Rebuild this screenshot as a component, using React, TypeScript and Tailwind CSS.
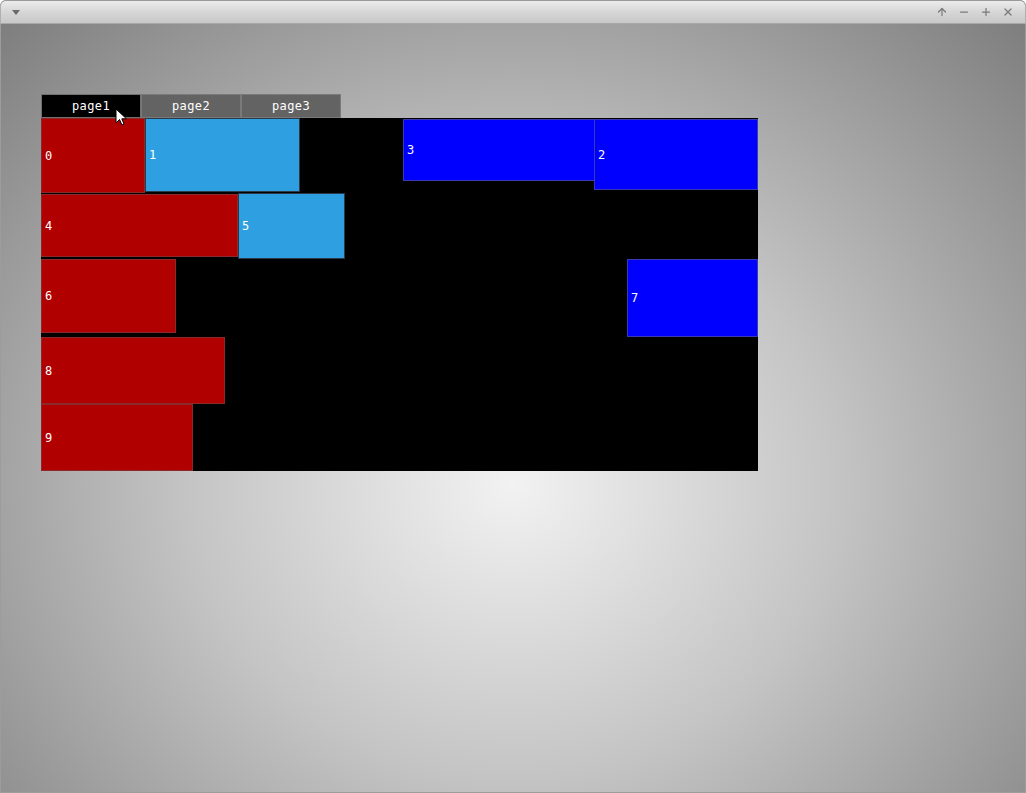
import { ArrowUp, Minus, Plus, X } from "lucide-react";

type Box = { id: number; left: number; top: number; w: number; h: number; kind: "red" | "sky" | "blue" };

const boxes: Box[] = [
    { id: 0, left: 0, top: 0, w: 104, h: 75, kind: "red" },
    { id: 1, left: 104, top: 0, w: 155, h: 74, kind: "sky" },
    { id: 3, left: 362, top: 1, w: 192, h: 62, kind: "blue" },
    { id: 2, left: 553, top: 1, w: 164, h: 71, kind: "blue" },
    { id: 4, left: 0, top: 76, w: 197, h: 63, kind: "red" },
    { id: 5, left: 197, top: 75, w: 107, h: 66, kind: "sky" },
    { id: 6, left: 0, top: 141, w: 135, h: 74, kind: "red" },
    { id: 7, left: 586, top: 141, w: 131, h: 78, kind: "blue" },
    { id: 8, left: 0, top: 219, w: 184, h: 67, kind: "red" },
    { id: 9, left: 0, top: 286, w: 152, h: 67, kind: "red" },
];

const kindClass = {
    red: "bg-[#b00000] border-[#8a2a2a]",
    sky: "bg-[#2ea0e2] border-[#2b3a48]",
    blue: "bg-[#0000ff] border-[#3a3ab0]",
};

function App() {
    return (
        <div className="w-[1026px] h-[793px] flex flex-col overflow-hidden font-['DejaVu_Sans_Mono',monospace] bg-[#8a8a8a] rounded-t-[6px]">
            <div className="h-[24px] shrink-0 flex items-center justify-between px-[10px] bg-gradient-to-b from-[#ececec] via-[#d6d6d6] to-[#c8c8c8] border-b border-[#a8a8a8] rounded-t-[6px] border-t border-x border-t-[#9a9a9a] border-x-[#b0b0b0]">
                <svg width="10" height="6" viewBox="0 0 10 6" className="mt-[1px]">
                    <path d="M1 0 L9 0 L5 5 Z" fill="#6a6a6a" />
                </svg>
                <div className="flex items-center gap-[10px] text-[#7a7a7a] pr-[1px]">
                    <ArrowUp size={12} strokeWidth={2.5} />
                    <Minus size={12} strokeWidth={2.5} />
                    <Plus size={12} strokeWidth={2.5} />
                    <X size={12} strokeWidth={2.5} />
                </div>
            </div>
            <div className="flex-1 relative border-x border-b border-[#9c9c9c] bg-[radial-gradient(ellipse_farthest-corner_at_50%_60%,#f2f2f2_0%,#c4c4c4_45%,#7e7e7e_100%)]">
                <div className="pt-[70px] pl-[40px]">
                    <div className="flex">
                        <div className="w-[100px] h-[24px] flex items-center justify-center bg-black border border-[#707070] text-white text-[12px] tracking-[0.4px]">page1</div>
                        <div className="w-[100px] h-[24px] flex items-center justify-center bg-[#636363] border border-[#7a7a7a] text-white text-[12px] tracking-[0.4px]">page2</div>
                        <div className="w-[100px] h-[24px] flex items-center justify-center bg-[#636363] border border-[#7a7a7a] text-white text-[12px] tracking-[0.4px]">page3</div>
                    </div>
                    <div className="relative w-[717px] h-[353px] bg-black">
                        {boxes.map((b) => (
                            <div
                                key={b.id}
                                className={`absolute flex items-center border pl-[3px] text-white text-[12px] ${kindClass[b.kind]}`}
                                style={{ left: b.left, top: b.top, width: b.w, height: b.h }}
                            >
                                {b.id}
                            </div>
                        ))}
                    </div>
                </div>
                <svg className="absolute left-[114px] top-[84px]" width="13" height="19" viewBox="0 0 13 19">
                    <path d="M1 1 L1 15 L4.5 11.5 L7 17 L9 16 L6.8 10.8 L11.5 10.8 Z" fill="white" stroke="black" strokeWidth="1" />
                </svg>
            </div>
        </div>
    );
}

export default App;
